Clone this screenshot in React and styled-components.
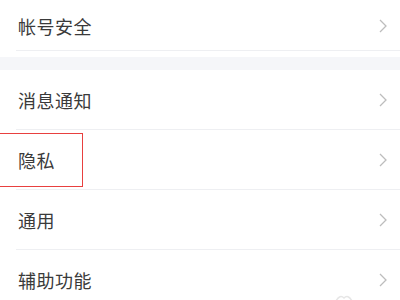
import React from "react";
import styled, { createGlobalStyle } from "styled-components";

const Global = createGlobalStyle`
  html, body { margin: 0; padding: 0; background: #fff; }
  body { font-family: "Noto Sans CJK SC", "Noto Sans", sans-serif; overflow: hidden; }
`;

const Page = styled.div`
  position: relative;
  width: 400px;
  height: 300px;
  overflow: hidden;
  background: #fff;
`;

const Row = styled.div`
  position: relative;
  display: flex;
  align-items: center;
  justify-content: space-between;
  height: ${(p) => p.$h || 60}px;
  padding: 0 13px 0 18px;
  box-sizing: border-box;
  &::after {
    content: "";
    position: absolute;
    left: 16px;
    right: 0;
    bottom: 0;
    height: 1px;
    background: ${(p) => (p.$line ? "#eeeff2" : "transparent")};
  }
`;

const Label = styled.span`
  font-size: 18px;
  color: #3a3a3a;
  letter-spacing: 0.5px;
  line-height: 1;
`;

const Band = styled.div`
  height: 13px;
  margin-top: 6px;
  background: #f5f6f9;
`;

const Highlight = styled.div`
  position: absolute;
  left: -1px;
  top: 133px;
  width: 84px;
  height: 54px;
  border: 1.5px solid #e8403f;
  box-sizing: border-box;
`;

const Mark = styled.svg`
  position: absolute;
  left: 334px;
  top: 292px;
`;

const Chevron = () => (
  <svg width="8" height="14" viewBox="0 0 8 14">
    <path d="M1 1 L7 7 L1 13" fill="none" stroke="#bdbdbd" strokeWidth="1.3" />
  </svg>
);

const items = [
  { label: "消息通知" },
  { label: "隐私" },
  { label: "通用" },
  { label: "辅助功能" },
];

export default function App() {
  return (
    <Page>
      <Global />
      <Row $h={51} $line>
        <Label>帐号安全</Label>
        <Chevron />
      </Row>
      <Band />
      {items.map((it) => (
        <Row key={it.label} $line>
          <Label>{it.label}</Label>
          <Chevron />
        </Row>
      ))}
      <Highlight />
      <Mark width="20" height="10" viewBox="0 0 20 10">
        <path d="M2 9 Q6 2 10 6 Q14 2 18 9" fill="none" stroke="#e6e6e6" strokeWidth="1.5" />
      </Mark>
    </Page>
  );
}
